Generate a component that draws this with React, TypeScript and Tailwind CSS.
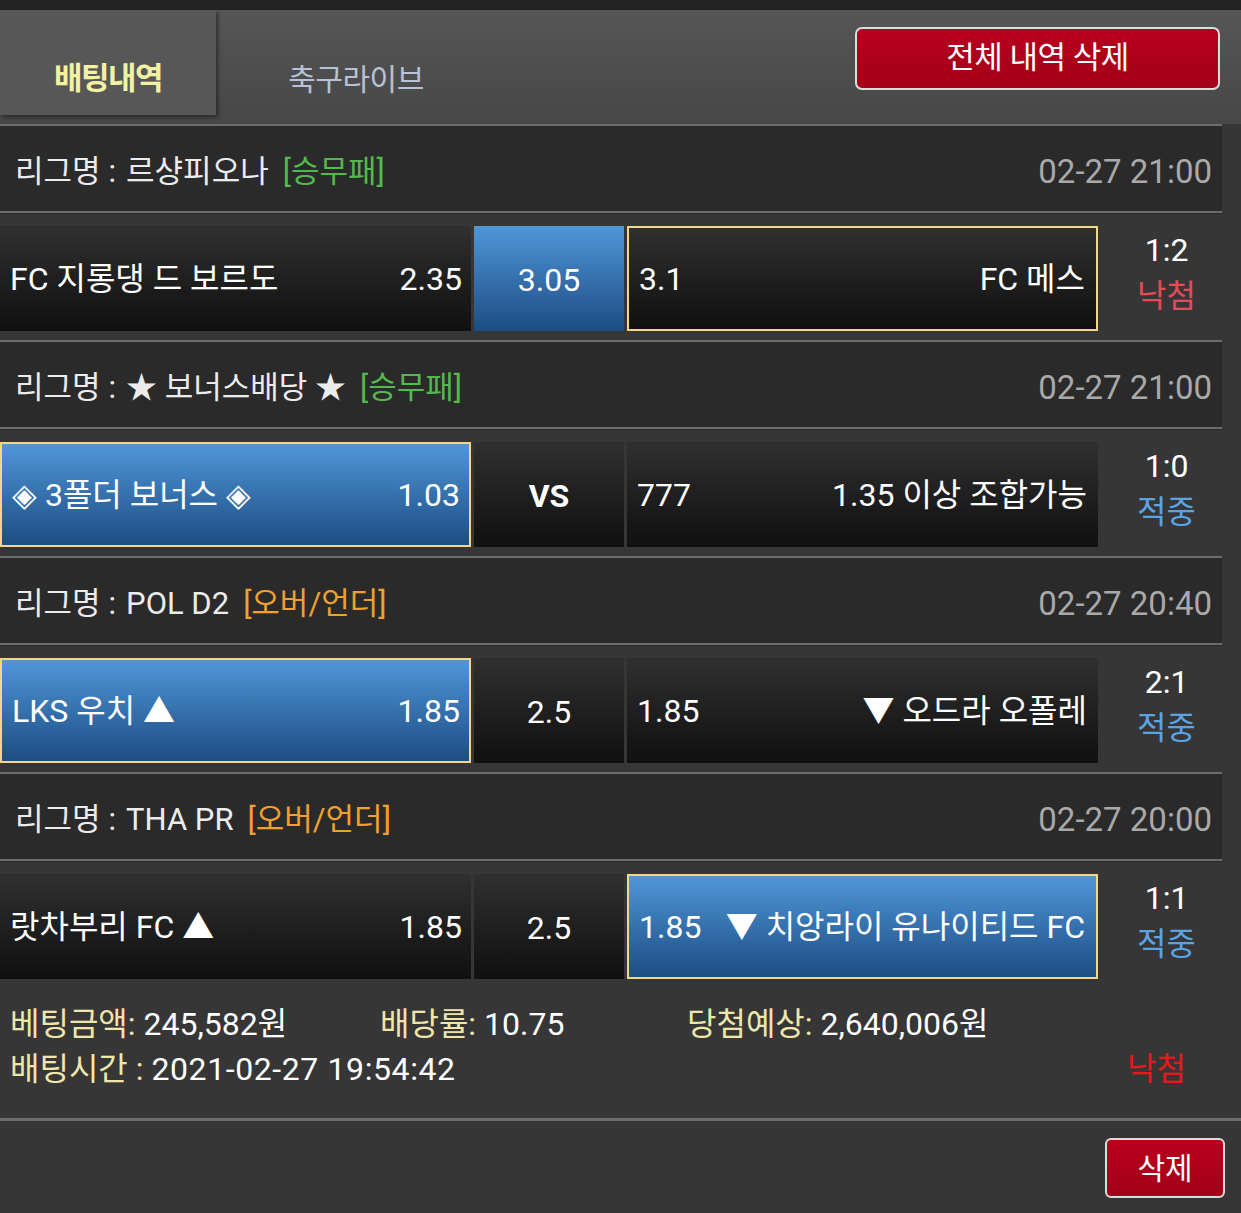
import React from 'react';

type Cell = { blue?: boolean; gold?: boolean };

type Game = {
  league: string;
  tag: string;
  tagColor: string;
  time: string;
  home: string;
  homeOdd: string;
  mid: string;
  midBold?: boolean;
  awayOdd: string;
  away: string;
  cells: [Cell, Cell, Cell];
  score: string;
  result: string;
  win: boolean;
};

const games: Game[] = [
  {
    league: '르샹피오나',
    tag: '[승무패]',
    tagColor: 'text-[#55b84e]',
    time: '02-27 21:00',
    home: 'FC 지롱댕 드 보르도',
    homeOdd: '2.35',
    mid: '3.05',
    awayOdd: '3.1',
    away: 'FC 메스',
    cells: [{}, { blue: true }, { gold: true }],
    score: '1:2',
    result: '낙첨',
    win: false,
  },
  {
    league: '★ 보너스배당 ★',
    tag: '[승무패]',
    tagColor: 'text-[#55b84e]',
    time: '02-27 21:00',
    home: '◈ 3폴더 보너스 ◈',
    homeOdd: '1.03',
    mid: 'VS',
    midBold: true,
    awayOdd: '777',
    away: '1.35 이상 조합가능',
    cells: [{ blue: true, gold: true }, {}, {}],
    score: '1:0',
    result: '적중',
    win: true,
  },
  {
    league: 'POL D2',
    tag: '[오버/언더]',
    tagColor: 'text-[#efa02e]',
    time: '02-27 20:40',
    home: 'LKS 우치 ▲',
    homeOdd: '1.85',
    mid: '2.5',
    awayOdd: '1.85',
    away: '▼ 오드라 오폴레',
    cells: [{ blue: true, gold: true }, {}, {}],
    score: '2:1',
    result: '적중',
    win: true,
  },
  {
    league: 'THA PR',
    tag: '[오버/언더]',
    tagColor: 'text-[#efa02e]',
    time: '02-27 20:00',
    home: '랏차부리 FC ▲',
    homeOdd: '1.85',
    mid: '2.5',
    awayOdd: '1.85',
    away: '▼ 치앙라이 유나이티드 FC',
    cells: [{}, {}, { blue: true, gold: true }],
    score: '1:1',
    result: '적중',
    win: true,
  },
];

const cellBg = (c: Cell) =>
  (c.blue
    ? 'bg-gradient-to-b from-[#4f97d9] to-[#1d4d83]'
    : 'bg-gradient-to-b from-[#303030] to-[#101010]') +
  (c.gold ? ' border-2 border-[#f2d68a]' : '');

const Sep = () => <div className="h-[3px] bg-[#6c6c6c] border-b border-[#2a2a2a]" />;

const App = () => {
  return (
    <div
      className="w-[1241px] min-h-[1213px] bg-[#363636] text-white"
      style={{ fontFamily: "Roboto, 'Noto Sans CJK KR', sans-serif" }}
    >
      <div className="h-[10px] bg-[#232323]" />

      {/* Tabs */}
      <div className="h-[114px] bg-gradient-to-b from-[#565656] to-[#474747] flex items-start">
        <div className="w-[216px] h-[105px] bg-[#575757] shadow-[2px_2px_4px_rgba(0,0,0,0.45)] flex items-center justify-center pt-[34px]">
          <span className="text-[31px] font-bold text-[#f2f2a2] tracking-[-1.5px]">배팅내역</span>
        </div>
        <div className="w-[280px] h-[105px] flex items-center justify-center pt-[34px]">
          <span className="text-[30px] text-[#b7c2d6] tracking-[-0.5px]">축구라이브</span>
        </div>
        <div className="flex-1 flex justify-end pr-[21px] pt-[17px]">
          <button className="w-[365px] h-[63px] rounded-[7px] border-2 border-[#dcdcdc] bg-gradient-to-b from-[#b8001e] to-[#a30019] text-[31px] text-white tracking-[-0.5px]">
            전체 내역 삭제
          </button>
        </div>
      </div>

      {/* Games */}
      <div className="w-[1222px]">
        {games.map((g, i) => (
          <div key={i}>
            <Sep />
            <div className="h-[84px] bg-[#2a2a2a] flex items-center justify-between pl-[15px] pr-[10px] pt-[6px]">
              <div className="flex items-center text-[31px] text-[#ececec]">
                <span>리그명</span>
                <span className="ml-[8px] mr-[10px]">:</span>
                <span>{g.league}</span>
                <span className={`${g.tagColor} ml-[14px]`}>{g.tag}</span>
              </div>
              <div className="text-[33px] text-[#a9a9a9]">{g.time}</div>
            </div>
            <Sep />
            <div className="h-[126px] flex pt-[12px] pb-[9px] gap-[3px]">
              <div className={`w-[471px] flex items-center justify-between pl-[10px] pr-[9px] text-[32px] ${cellBg(g.cells[0])}`}>
                <span>{g.home}</span>
                <span>{g.homeOdd}</span>
              </div>
              <div className={`w-[150px] flex items-center justify-center pt-[2px] text-[32px] ${g.midBold ? 'font-bold' : ''} ${cellBg(g.cells[1])}`}>
                {g.mid}
              </div>
              <div className={`w-[471px] flex items-center justify-between pl-[10px] pr-[11px] text-[32px] ${cellBg(g.cells[2])}`}>
                <span>{g.awayOdd}</span>
                <span>{g.away}</span>
              </div>
              <div className="flex-1 flex flex-col items-center justify-center text-[32px] leading-[46px] pb-[12px] pl-[10px]">
                <span>{g.score}</span>
                <span className={g.win ? 'text-[#5ca3e2]' : 'text-[#e44a5a]'}>{g.result}</span>
              </div>
            </div>
          </div>
        ))}
      </div>

      {/* Summary */}
      <div className="h-[130px] pl-[10px] pr-[55px] pt-[14px] text-[32px]">
        <div className="flex h-[44px] items-center">
          <div className="w-[370px]">
            <span className="text-[#eee6ab]">베팅금액:</span> 245,582원
          </div>
          <div className="w-[307px]">
            <span className="text-[#eee6ab]">배당률:</span> 10.75
          </div>
          <div>
            <span className="text-[#eee6ab]">당첨예상:</span> 2,640,006원
          </div>
        </div>
        <div className="flex h-[46px] items-center justify-between">
          <div className="whitespace-pre">
            <span className="text-[#eee6ab]">배팅시간 :</span>{' '}
            <span className="tracking-[0.6px]">2021-02-27 19:54:42</span>
          </div>
          <span className="text-[#e31b1b]">낙첨</span>
        </div>
      </div>
      <div className="h-[3px] bg-[#6c6c6c]" />
      <div className="flex justify-end pr-[16px] pt-[17px] pb-[12px]">
        <button className="w-[120px] h-[60px] rounded-[6px] border-2 border-[#dcdcdc] bg-gradient-to-b from-[#b8001e] to-[#a30019] text-[30px] text-white">
          삭제
        </button>
      </div>
    </div>
  );
};

export default App;
